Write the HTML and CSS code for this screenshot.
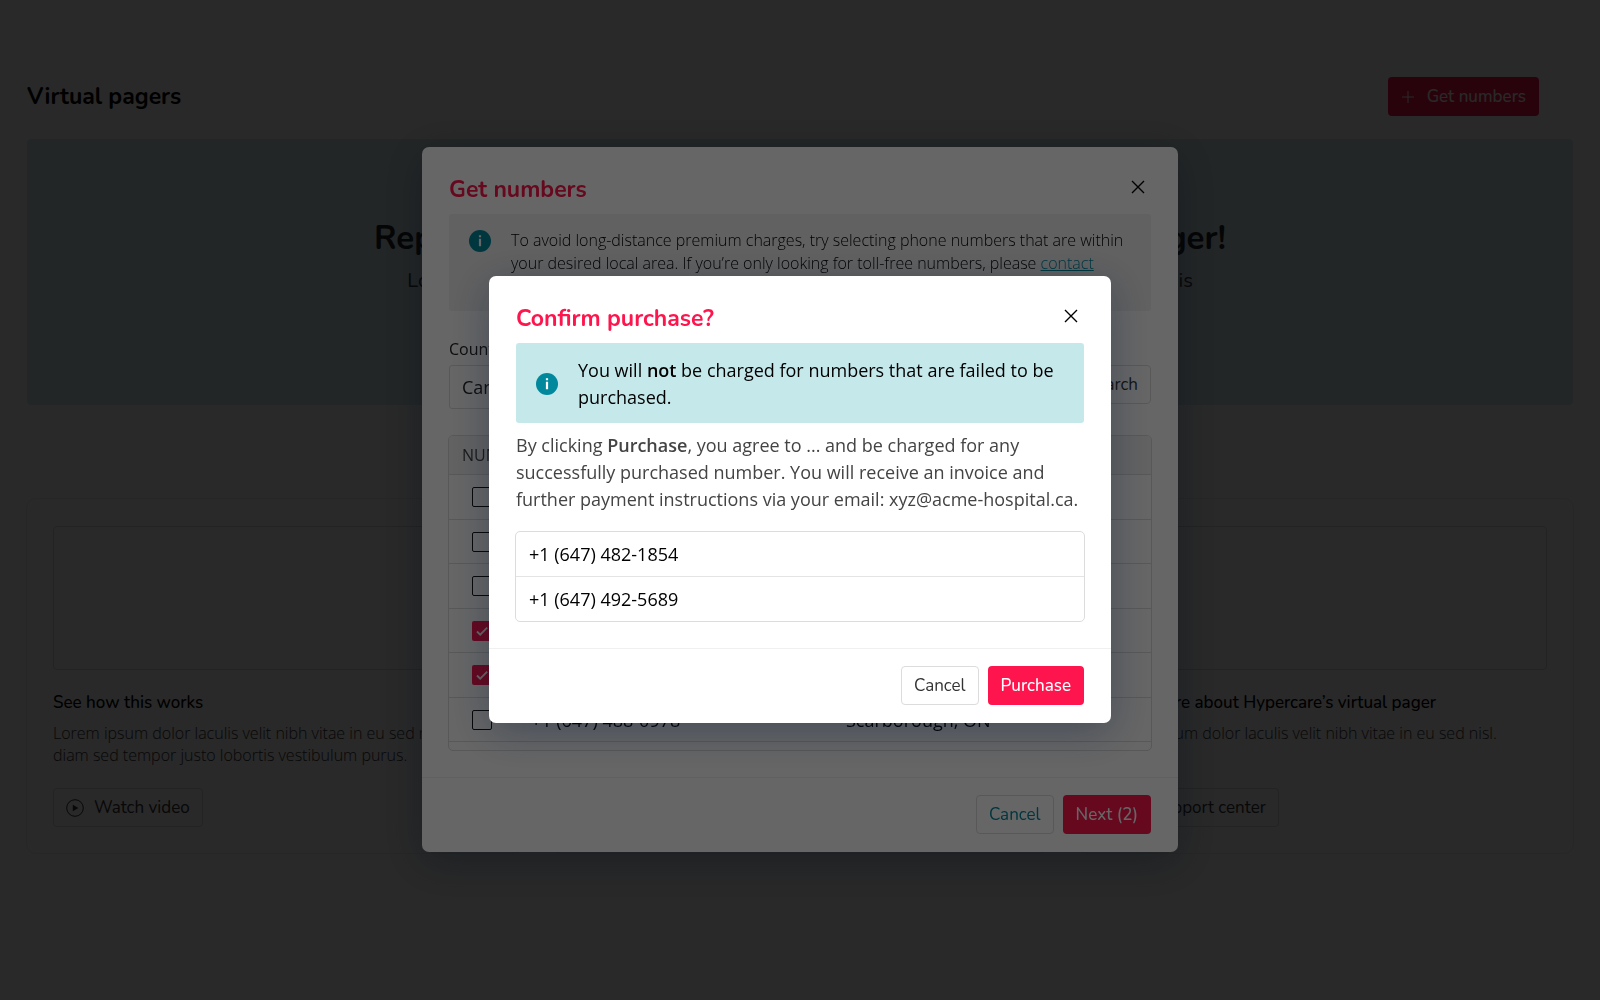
FILE: index.html
```html
<!DOCTYPE html>
<html lang="en">
<head>
<meta charset="utf-8">
<meta name="viewport" content="width=device-width, initial-scale=1">
<title>Virtual pagers</title>
<link rel="stylesheet" href="styles.css">
</head>
<body>
<main class="page">
  <header class="page-header">
    <h1 class="page-title">Virtual pagers</h1>
    <button class="btn btn-primary btn-icon" type="button">
      <svg class="icon-plus" viewBox="0 0 14 14" aria-hidden="true"><path d="M7 1v12M1 7h12"/></svg>
      Get numbers
    </button>
  </header>
  <section class="banner">
    <h2 class="banner-title">Replace your old pagers with Hypercare’s virtual pager!</h2>
    <p class="banner-text">Lorem ipsum dolor sit amet consectetur adipiscing elit laculis velit nibh vitae in eu turpis</p>
  </section>
  <section class="cards">
    <article class="card">
      <div class="card-media"></div>
      <h3 class="card-title">See how this works</h3>
      <p class="card-text">Lorem ipsum dolor laculis velit nibh vitae in eu sed neque diam sed tempor justo lobortis vestibulum purus.</p>
      <button class="btn btn-outline btn-icon btn-video" type="button">
        <svg class="icon-play" viewBox="0 0 18 18" aria-hidden="true"><circle cx="9" cy="9" r="8.3"/><path d="M6.8 5.8v6.4L12.3 9z"/></svg>
        Watch video
      </button>
    </article>
    <article class="card">
      <div class="card-media"></div>
      <h3 class="card-title">Set up your numbers</h3>
      <p class="card-text">Lorem ipsum dolor laculis velit nibh vitae in eu sed nisl.</p>
      <button class="btn btn-outline" type="button">Read guide</button>
    </article>
    <article class="card">
      <div class="card-media"></div>
      <h3 class="card-title">Learn more about Hypercare’s virtual pager</h3>
      <p class="card-text">Lorem ipsum dolor laculis velit nibh vitae in eu sed nisl.</p>
      <button class="btn btn-outline" type="button">Visit support center</button>
    </article>
  </section>
</main>

<div class="overlay">
  <section class="modal modal-wide" role="dialog" aria-labelledby="numbers-title">
    <div class="modal-body">
      <header class="modal-header">
        <h2 class="modal-title" id="numbers-title">Get numbers</h2>
        <button class="close" type="button" aria-label="Close"><svg viewBox="0 0 14 14" aria-hidden="true"><path d="M1 1l12 12M13 1L1 13"/></svg></button>
      </header>
      <div class="notice notice-muted">
        <svg class="icon-info" viewBox="0 0 22 22" aria-hidden="true"><circle cx="11" cy="11" r="11"/><path d="M9.9 5.2h2.2v2H9.9zM9.9 8.8h2.2v7.4H9.9z"/></svg>
        <p>To avoid long-distance premium charges, try selecting phone numbers that are within your desired local area. If you’re only looking for toll-free numbers, please <a href="#support">contact Hypercare support.</a></p>
      </div>
      <form class="filters">
        <div class="field">
          <label for="country">Country</label>
          <select id="country"><option>Canada</option></select>
        </div>
        <div class="field">
          <label for="area">Area code</label>
          <input id="area" type="text" value="647">
        </div>
        <button class="btn btn-outline" type="button">Search</button>
      </form>
      <div class="table-box">
        <table class="numbers">
          <thead><tr><th colspan="2">NUMBERS</th><th>LOCATION</th></tr></thead>
          <tbody>
            <tr><td class="pick"><input type="checkbox" aria-label="Select +1 (647) 482-1022"></td><td>+1 (647) 482-1022</td><td>Toronto, ON</td></tr>
            <tr><td class="pick"><input type="checkbox" aria-label="Select +1 (647) 483-3310"></td><td>+1 (647) 483-3310</td><td>Toronto, ON</td></tr>
            <tr><td class="pick"><input type="checkbox" aria-label="Select +1 (647) 484-7741"></td><td>+1 (647) 484-7741</td><td>Toronto, ON</td></tr>
            <tr><td class="pick"><input type="checkbox" checked aria-label="Select +1 (647) 482-1854"></td><td>+1 (647) 482-1854</td><td>Toronto, ON</td></tr>
            <tr><td class="pick"><input type="checkbox" checked aria-label="Select +1 (647) 492-5689"></td><td>+1 (647) 492-5689</td><td>Toronto, ON</td></tr>
            <tr><td class="pick"><input type="checkbox" aria-label="Select +1 (647) 488-0978"></td><td>+1 (647) 488-0978</td><td>Scarborough, ON</td></tr>
          </tbody>
        </table>
      </div>
    </div>
    <footer class="modal-footer">
      <button class="btn btn-outline btn-teal" type="button">Cancel</button>
      <button class="btn btn-primary" type="button">Next (2)</button>
    </footer>
  </section>
</div>

<div class="overlay">
  <section class="modal modal-narrow" role="dialog" aria-modal="true" aria-labelledby="confirm-title">
    <div class="modal-body">
      <header class="modal-header">
        <h2 class="modal-title" id="confirm-title">Confirm purchase?</h2>
        <button class="close" type="button" aria-label="Close"><svg viewBox="0 0 14 14" aria-hidden="true"><path d="M1 1l12 12M13 1L1 13"/></svg></button>
      </header>
      <div class="notice notice-info">
        <svg class="icon-info" viewBox="0 0 22 22" aria-hidden="true"><circle cx="11" cy="11" r="11"/><path d="M9.9 5.2h2.2v2H9.9zM9.9 8.8h2.2v7.4H9.9z"/></svg>
        <p>You will <strong>not</strong> be charged for numbers that are failed to be purchased.</p>
      </div>
      <p class="terms">By clicking <strong>Purchase</strong>, you agree to ... and be charged for any successfully purchased number. You will receive an invoice and further payment instructions via your email: xyz@acme-hospital.ca.</p>
      <ul class="number-list">
        <li>+1 (647) 482-1854</li>
        <li>+1 (647) 492-5689</li>
      </ul>
    </div>
    <footer class="modal-footer">
      <button class="btn btn-outline" type="button">Cancel</button>
      <button class="btn btn-primary" type="button">Purchase</button>
    </footer>
  </section>
</div>
</body>
</html>
```
FILE: styles.css
```css
:root {
  --heading: Nunito, Lato, sans-serif;
  --body: "Open Sans", "Noto Sans", sans-serif;
  --red: #ff154d;
  --teal: #00889c;
  --line: #dcdcdc;
}

* { box-sizing: border-box; }

body {
  margin: 0;
  min-height: 100vh;
  background: #fff;
  color: #000;
  font-family: var(--body);
  font-size: 16px;
}

h1, h2, h3, p, ul { margin: 0; padding: 0; }
strong { font-weight: 600; }

/* Buttons */
.btn {
  display: inline-flex;
  align-items: center;
  height: 39px;
  padding: 0 12px;
  border: 1px solid transparent;
  border-radius: 4px;
  font: 500 17px/24px var(--heading);
  white-space: nowrap;
}
.btn-primary { background: var(--red); color: #fff; }
.btn-outline { background: #fff; border-color: var(--line); color: #333; font-weight: 450; }
.btn-teal { color: var(--teal); }
.btn-icon { gap: 12px; }
.btn-video { gap: 10px; }
.icon-plus { width: 14px; fill: none; stroke: #fff; }
.icon-play { width: 18px; fill: none; stroke: #333; }
.icon-play path { fill: #333; stroke: none; }

/* Page */
.page { padding: 77px 27px 40px; }
.page-header {
  display: flex;
  justify-content: space-between;
  align-items: center;
  padding-right: 34px;
  margin-bottom: 23px;
}
.page-title { font: 700 23px/32px var(--heading); }
.banner {
  height: 266px;
  padding-top: 80px;
  border-radius: 4px;
  background: #d9eef0;
  color: #222;
  text-align: center;
}
.banner-title { font: 700 33px/40px var(--heading); }
.banner-text { margin-top: 6px; font: 400 20px/32px var(--heading); color: #333; }

.cards {
  display: grid;
  grid-template-columns: repeat(3, 1fr);
  gap: 27px;
  margin: 93px -1px 0;
}
.card {
  display: flex;
  flex-direction: column;
  align-items: flex-start;
  padding: 27px 26px 26px;
  border: 1px solid #f0f0f0;
  border-radius: 10px;
}
.card-media {
  width: 100%;
  height: 144px;
  border: 1px solid var(--line);
  border-radius: 4px;
}
.card-title { margin-top: 21px; font: 500 17px/24px var(--heading); }
.card-text { min-height: 44px; margin: 7px 0 22px; font-weight: 300; line-height: 22px; color: #333; }

/* Dialogs */
.overlay {
  position: fixed;
  inset: 0;
  display: flex;
  align-items: center;
  justify-content: center;
  padding-bottom: 1px;
  background: rgba(0, 0, 0, 0.6);
}
.modal {
  max-width: 100%;
  border-radius: 7px;
  background: #fff;
  box-shadow: 0 9px 40px rgba(10, 30, 60, 0.35);
}
.modal-wide { width: 756px; }
.modal-narrow { width: 622px; }
.modal-body { padding: 27px 27px 26px; }
.modal-header {
  display: flex;
  justify-content: space-between;
  align-items: flex-start;
  height: 40px;
}
.modal-title { font: 700 23px/32px var(--heading); color: var(--red); }
.close {
  display: flex;
  padding: 6px;
  border: 0;
  background: none;
}
.close svg { width: 14px; height: 14px; fill: none; stroke: #000; stroke-width: 1.4; }
.modal-footer {
  display: flex;
  justify-content: flex-end;
  gap: 9px;
  padding: 17px 27px 18px;
  border-top: 1px solid #f0f0f0;
}

.notice {
  display: flex;
  gap: 20px;
  padding: 14px 12px 12px 20px;
  border-radius: 3px;
}
.notice-muted { padding-block: 15px 13px; background: #f2f2f2; font-weight: 300; line-height: 23px; }
.notice-info { align-items: center; background: #c5e8eb; font-size: 18px; line-height: 27px; }
.notice a { color: var(--teal); }
.icon-info { flex: none; width: 22px; height: 22px; fill: var(--teal); }
.icon-info path { fill: #fff; }
.notice-muted .icon-info { margin-top: 1px; }

.filters {
  display: grid;
  grid-template-columns: 1fr 1fr auto;
  gap: 18px;
  margin: 26px 0;
}
.field { display: flex; flex-direction: column; gap: 4px; }
.field label { font: 500 16px/24px var(--body); color: #222; }
.field select, .field input {
  width: 100%;
  height: 44px;
  padding: 0 12px;
  border: 1px solid var(--line);
  border-radius: 3px;
  background: #fff;
  color: #222;
  font: 400 18px/24px var(--body);
  appearance: none;
}
.filters .btn { margin-top: 28px; }

.table-box {
  height: 316px;
  margin: 0 -1px;
  overflow: hidden;
  border: 1px solid var(--line);
  border-radius: 5px;
}
.numbers { width: 100%; border-spacing: 0; font-size: 18px; }
.numbers th {
  height: 39px;
  padding: 0 13px;
  border-bottom: 1px solid var(--line);
  background: #f4f4f4;
  color: #444;
  font-size: 16px;
  font-weight: 400;
  text-align: left;
}
.numbers td { height: 44px; padding: 0; border-bottom: 1px solid var(--line); }
.numbers tr:nth-child(odd) td { height: 45px; }
.numbers th:last-child, .numbers td:last-child { width: 305px; padding: 0; }
.numbers .pick { width: 82px; padding-left: 23px; }
.pick input {
  display: block;
  width: 20px;
  height: 20px;
  margin: 0;
  border: 1px solid #111;
  border-radius: 2px;
  appearance: none;
}
.pick input:checked {
  border: 0;
  background: var(--red) url("data:image/svg+xml,%3Csvg xmlns='http://www.w3.org/2000/svg' viewBox='0 0 20 20'%3E%3Cpath d='M5 10.5l3.2 3.2L15.2 6.6' fill='none' stroke='white' stroke-width='1.8'/%3E%3C/svg%3E");
}

.terms { margin-top: 9px; font-size: 18px; line-height: 27px; color: #444; }
.number-list {
  margin: 18px -1px 0;
  border: 1px solid var(--line);
  border-radius: 5px;
  font-size: 18px;
  list-style: none;
}
.number-list li { padding: 0 13px; line-height: 44px; }
.number-list li + li { border-top: 1px solid #e4e4e4; }
```
